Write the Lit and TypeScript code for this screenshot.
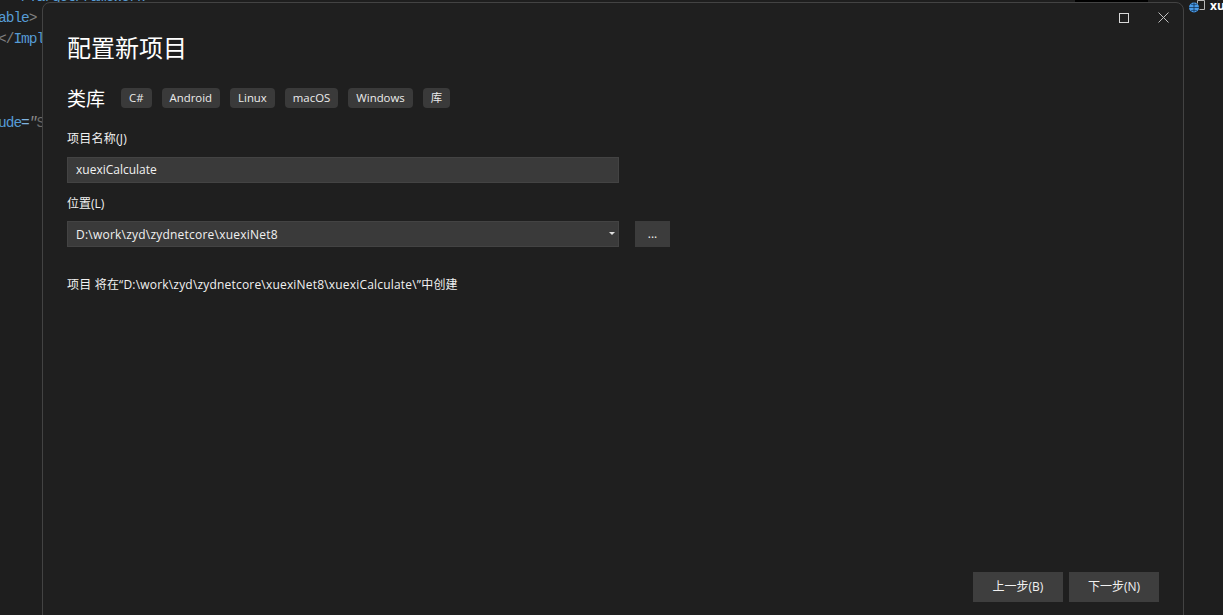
import { LitElement, html, css } from "lit";
import { customElement } from "lit/decorators.js";

@customElement("app-root")
export class AppRoot extends LitElement {
  static styles = css`
    :host {
      display: block;
      position: relative;
      width: 1223px;
      height: 615px;
      overflow: hidden;
      background: #1e1e1e;
      font-family: "Open Sans", "Noto Sans CJK SC", sans-serif;
      color: #f1f1f1;
      font-size: 12px;
    }
    .code {
      position: absolute;
      left: -2px;
      top: -13px;
      margin: 0;
      font: 14.5px/21px "Liberation Mono", monospace;
      letter-spacing: -1px;
      color: #569cd6;
      white-space: pre;
    }
    .code .gray { color: #808080; }
    .code .eq { color: #7fb4e0; }
    .code .q { color: #8a8a8a; font-style: italic; }
    .code .dim { color: #6b6b6b; }
    .blackbar {
      position: absolute;
      left: 1075px;
      top: 0;
      width: 73px;
      height: 2px;
      background: #000;
    }
    .side {
      position: absolute;
      left: 1188px;
      top: 0;
      display: flex;
      align-items: flex-start;
      gap: 5px;
    }
    .side svg { display: block; }
    .side b {
      font: 700 12px/12px "Open Sans", sans-serif;
      color: #fff;
    }
    .dialog {
      position: absolute;
      left: 42px;
      top: 2px;
      width: 1142px;
      height: 640px;
      box-sizing: border-box;
      border: 1px solid #434343;
      border-top-right-radius: 8px;
      border-top-left-radius: 8px;
      background: #1f1f1f;
      padding: 28px 24px 0 24px;
      display: flex;
      flex-direction: column;
      align-items: flex-start;
    }
    .winbtns {
      position: absolute;
      top: 9px;
      right: 14px;
      display: flex;
      gap: 29px;
      align-items: center;
    }
    .winbtns svg { display: block; }
    h1 {
      margin: 0;
      font: 400 24px/32px "Noto Sans CJK SC", sans-serif;
      color: #fff;
    }
    .tagrow {
      display: flex;
      align-items: center;
      margin-top: 22px;
      height: 26px;
    }
    .kind {
      font: 400 19px/26px "Noto Sans CJK SC", sans-serif;
      color: #fff;
      width: 54px;
    }
    .tags { display: flex; gap: 10px; }
    .tag {
      height: 20px;
      line-height: 20px;
      padding: 0 8px;
      background: #3a3a3a;
      border-radius: 4px;
      font-size: 11.4px;
      color: #ececec;
    }
    label {
      display: block;
      line-height: 18px;
      font-size: 12px;
    }
    .l1 { margin-top: 19px; letter-spacing: 0.25px; }
    .l2 { margin-top: 12px; }
    .field {
      box-sizing: border-box;
      width: 552px;
      height: 26px;
      margin-top: 9px;
      background: #3a3a3a;
      border: 1px solid #434343;
      padding: 0 8px;
      line-height: 24px;
      font-size: 12px;
      color: #f1f1f1;
      position: relative;
    }
    .path { letter-spacing: 0.22px; }
    .locrow { display: flex; gap: 16px; margin-top: 8px; }
    .locrow .field { margin-top: 0; line-height: 26px; }
    .caret {
      position: absolute;
      right: 3px;
      top: 10px;
      width: 0;
      height: 0;
      border-left: 3px solid transparent;
      border-right: 3px solid transparent;
      border-top: 3px solid #e0e0e0;
    }
    .more {
      width: 35px;
      height: 26px;
      line-height: 26px;
      text-align: center;
      background: #3c3c3c;
      color: #f1f1f1;
      font-size: 12px;
    }
    .note {
      margin-top: 29px;
      line-height: 18px;
      font-size: 12px;
      letter-spacing: 0.19px;
    }
    .footer {
      position: absolute;
      left: 930px;
      top: 569px;
      display: flex;
      gap: 6px;
    }
    .btn {
      width: 90px;
      height: 30px;
      line-height: 30px;
      text-align: center;
      background: #3e3e3e;
      color: #f1f1f1;
      font-size: 12px;
    }
  `;

  render() {
    const tags = ["C#", "Android", "Linux", "macOS", "Windows", "库"];
    return html`
      <pre class="code">  &lt;/TargetFramework&gt;
able<span class="gray">&gt;</span>
<span class="gray">&lt;/</span>Impl



ude<span class="eq">=</span><span class="q">"</span><span class="dim">S</span></pre>
      <div class="blackbar"></div>
      <div class="side">
        <svg width="17" height="14" viewBox="0 0 17 14">
          <path d="M9.5 .5h7v9h-5" fill="none" stroke="#b8b8b8"></path>
          <path d="M9.5 .5v3" fill="none" stroke="#b8b8b8"></path>
          <circle cx="6" cy="7.5" r="5" fill="#4a9be8"></circle>
          <path d="M1 7.5h10M6 2.5v10M3 4c2 1 4 1 6 0M3 11c2-1 4-1 6 0" fill="none" stroke="#12365a" stroke-width=".8"></path>
        </svg>
        <b>xu</b>
      </div>
      <div class="dialog">
        <div class="winbtns">
          <svg width="10" height="10" viewBox="0 0 10 10">
            <rect x=".5" y=".5" width="9" height="9" fill="none" stroke="#d8d8d8"></rect>
          </svg>
          <svg width="11" height="11" viewBox="0 0 11 11">
            <path d="M.5.5l10 10M10.5.5l-10 10" stroke="#c0c0c0" fill="none"></path>
          </svg>
        </div>
        <h1>配置新项目</h1>
        <div class="tagrow">
          <div class="kind">类库</div>
          <div class="tags">${tags.map((t) => html`<span class="tag">${t}</span>`)}</div>
        </div>
        <label class="l1">项目名称(J)</label>
        <div class="field">xuexiCalculate</div>
        <label class="l2">位置(L)</label>
        <div class="locrow">
          <div class="field"><span class="path">D:\\work\\zyd\\zydnetcore\\xuexiNet8</span><span class="caret"></span></div>
          <div class="more">...</div>
        </div>
        <div class="note">项目 将在“D:\\work\\zyd\\zydnetcore\\xuexiNet8\\xuexiCalculate\\”中创建</div>
        <div class="footer">
          <div class="btn">上一步(B)</div>
          <div class="btn">下一步(N)</div>
        </div>
      </div>
    `;
  }
}
